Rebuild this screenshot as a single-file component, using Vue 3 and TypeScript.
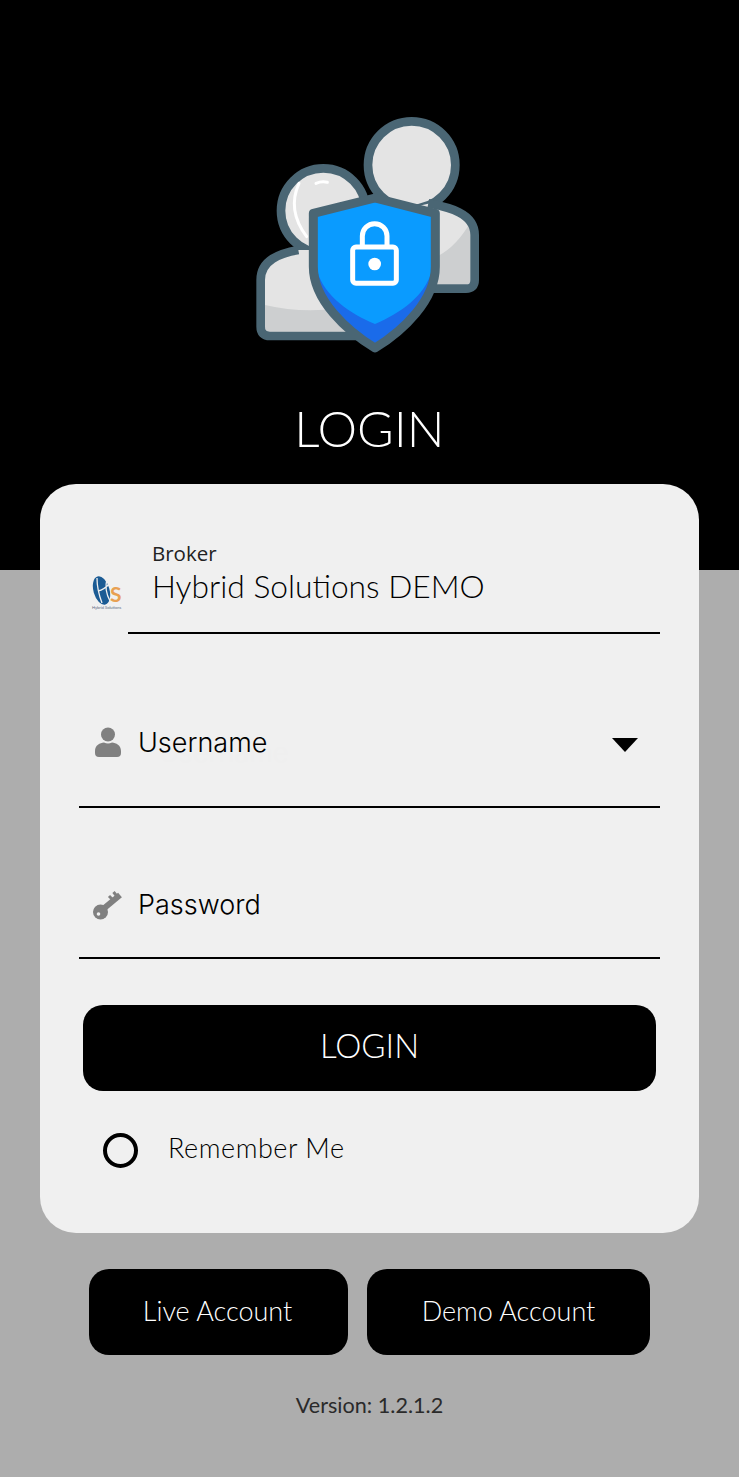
<template>
  <div class="page">
    <header class="hero">
      <svg class="hero-icon" viewBox="0 0 780 810" aria-hidden="true">
        <circle cx="515" cy="195" r="131" fill="#e4e4e4" stroke="#4a6674" stroke-width="26" />
        <path d="M578 308 C630 322 704 338 704 405 L704 540 Q704 566 678 566 L480 566 L480 330 Z" fill="#e4e4e4" />
        <path d="M692 365 Q650 440 590 470 L590 553 L678 553 Q692 553 692 540 Z" fill="#cdcfd0" />
        <path d="M565 310 C625 322 704 338 704 405 L704 540 Q704 566 678 566 L560 566" fill="none" stroke="#4a6674" stroke-width="26" />
        <circle cx="250" cy="332" r="127" fill="#e4e4e4" stroke="#4a6674" stroke-width="26" />
        <path d="M177 250 Q140 330 200 410" fill="none" stroke="#fff" stroke-width="9" stroke-linecap="round" />
        <path d="M228 250 Q245 243 262 247" fill="none" stroke="#fff" stroke-width="9" stroke-linecap="round" />
        <path d="M175 450 C120 460 62 480 62 540 L62 680 Q62 708 90 708 L360 708 L360 450 Z" fill="#e4e4e4" />
        <path d="M75 615 Q180 640 300 625 L340 695 L90 695 Q75 695 75 680 Z" fill="#cdcfd0" />
        <path d="M175 450 C120 460 62 480 62 540 L62 680 Q62 708 90 708 L360 708" fill="none" stroke="#4a6674" stroke-width="26" />
        <path d="M405 294 L220 340 L220 500 C220 600 320 692 405 744 C490 692 586 600 586 500 L586 340 Z" fill="#0a9bff" />
        <path d="M405 672 C480 640 555 590 576 510 L586 500 C586 600 490 692 405 744 C320 692 220 600 220 500 L232 515 C255 590 330 640 405 672 Z" fill="#1a6bea" />
        <path d="M405 294 L220 340 L220 500 C220 600 320 692 405 744 C490 692 586 600 586 500 L586 340 Z" fill="none" stroke="#4a6674" stroke-width="27" stroke-linejoin="round" />
        <rect x="338" y="441" width="131" height="109" rx="10" fill="none" stroke="#fff" stroke-width="15" />
        <path d="M367 441 L367 408 A37 37 0 0 1 441 408 L441 441" fill="none" stroke="#fff" stroke-width="15" />
        <circle cx="404" cy="492" r="19" fill="#fff" />
      </svg>
      <h1 class="hero-title">LOGIN</h1>
    </header>

    <main class="card">
      <div class="broker-row">
        <svg class="broker-logo" viewBox="0 0 34 36" aria-hidden="true">
          <ellipse cx="11.5" cy="14.5" rx="8" ry="14.5" transform="rotate(-16 11.5 14.5)" fill="#1b5b94" />
          <path d="M7 2 Q7 14 12 27 M8 15 Q14 14 20 7 M17 3 Q14 14 20 25" fill="none" stroke="#f0f0f0" stroke-width="1.3" />
          <text x="20" y="26" class="broker-s">S</text>
          <text x="2" y="33" class="broker-tiny">Hybrid Solutions</text>
        </svg>
        <div class="broker-field">
          <span class="broker-label">Broker</span>
          <span class="broker-name">Hybrid Solutions DEMO</span>
        </div>
      </div>

      <div class="input-row username-row">
        <svg class="input-icon" viewBox="0 0 28 30" aria-hidden="true">
          <circle cx="14" cy="7.5" r="7" fill="#808080" />
          <path d="M1 24 C1 18 6 16 10 15.5 Q14 17.5 18 15.5 C22 16 27 18 27 24 L27 26 Q27 30 23 30 L5 30 Q1 30 1 26 Z" fill="#808080" />
        </svg>
        <span class="input-text">Username</span>
        <span class="ghost-text">Username</span>
        <span class="caret"></span>
      </div>

      <div class="input-row password-row">
        <svg class="input-icon key-icon" viewBox="0 0 30 31" aria-hidden="true">
          <circle cx="7.5" cy="23" r="7.5" fill="#808080" />
          <path d="M9 21 L27 6" stroke="#808080" stroke-width="6" fill="none" />
          <path d="M16 7 L20 11 M20.5 3 L24.5 8" stroke="#808080" stroke-width="3" fill="none" />
          <circle cx="5.5" cy="25" r="1.8" fill="#f0f0f0" />
        </svg>
        <span class="input-text">Password</span>
      </div>

      <button class="login-btn" type="button">LOGIN</button>

      <label class="remember">
        <span class="remember-radio"></span>
        <span class="remember-text">Remember Me</span>
      </label>
    </main>

    <div class="accounts">
      <button class="account-btn live" type="button">Live Account</button>
      <button class="account-btn demo" type="button">Demo Account</button>
    </div>

    <p class="version">Version: {{ version }}</p>
  </div>
</template>

<script setup lang="ts">
const version: string = '1.2.1.2'
</script>

<style>
html,
body {
  margin: 0;
  padding: 0;
}
</style>

<style scoped>
.page {
  width: 739px;
  height: 1477px;
  overflow: hidden;
  background: linear-gradient(#000 570px, #adadad 570px);
  font-family: Lato, "Open Sans", sans-serif;
  font-weight: 300;
  color: #000;
}

.hero {
  height: 484px;
  box-sizing: border-box;
  padding-top: 100px;
  display: flex;
  flex-direction: column;
  align-items: center;
}

.hero-icon {
  width: 260px;
  height: 270px;
  display: block;
}

.hero-title {
  margin: 28px 0 0;
  font-size: 50px;
  line-height: 60px;
  font-weight: 300;
  color: #fff;
}

.card {
  width: 659px;
  height: 749px;
  margin-left: 40px;
  box-sizing: border-box;
  padding: 0 39px;
  background: #f0f0f0;
  border-radius: 36px;
}

.broker-row {
  height: 150px;
  display: flex;
  align-items: flex-end;
}

.broker-logo {
  width: 34px;
  height: 36px;
  margin: 0 4px 22px 11px;
  flex: none;
}

.broker-s {
  font: 700 21px Lato, sans-serif;
  fill: #e8a052;
}

.broker-tiny {
  font: 400 4px Lato, sans-serif;
  fill: #5a6a80;
}

.broker-field {
  flex: 1;
  height: 93px;
  box-sizing: border-box;
  padding-left: 24px;
  border-bottom: 2px solid #000;
  display: flex;
  flex-direction: column;
}

.broker-label {
  font: 400 20.5px/24px "Open Sans", sans-serif;
  color: #222;
}

.broker-name {
  font-size: 31.75px;
  line-height: 42px;
}

.input-row {
  position: relative;
  display: flex;
  align-items: flex-start;
  box-sizing: border-box;
  border-bottom: 2px solid #000;
}

.username-row {
  height: 174px;
  padding-top: 93px;
}

.password-row {
  height: 151px;
  padding-top: 81px;
}

.input-icon {
  width: 28px;
  height: 30px;
  margin: 0 15px;
  flex: none;
}

.key-icon {
  width: 30px;
  height: 31px;
  margin: 0 14px;
}

.input-text {
  position: relative;
  z-index: 1;
  margin: 1px 0 0 1px;
  font: 300 27px/30px Inter, "Liberation Sans", sans-serif;
  color: #000;
}

.ghost-text {
  position: absolute;
  left: 80px;
  top: 104px;
  font: 300 27px/30px Inter, "Liberation Sans", sans-serif;
  color: #efefef;
}

.caret {
  position: absolute;
  right: 22px;
  top: 104px;
  width: 0;
  height: 0;
  border-left: 13px solid transparent;
  border-right: 13px solid transparent;
  border-top: 14px solid #000;
}

.login-btn {
  display: block;
  width: 573px;
  height: 86px;
  margin: 46px 0 0 4px;
  padding: 0 0 6px;
  border: none;
  border-radius: 20px;
  background: #000;
  color: #fff;
  font-family: inherit;
  font-size: 33px;
  font-weight: 300;
}

.remember {
  display: flex;
  align-items: center;
  margin: 41px 0 0 24px;
  height: 36px;
}

.remember-radio {
  width: 35px;
  height: 35px;
  box-sizing: border-box;
  border: 4px solid #000;
  border-radius: 50%;
  flex: none;
}

.remember-text {
  margin-left: 30px;
  font-size: 27px;
  line-height: 30px;
  letter-spacing: 0.55px;
  position: relative;
  top: -2px;
}

.accounts {
  display: flex;
  gap: 19px;
  margin: 36px 0 0 89px;
}

.account-btn {
  height: 86px;
  padding: 0 0 4px;
  border: none;
  border-radius: 20px;
  background: #000;
  color: #fff;
  font-family: inherit;
  font-size: 27px;
  font-weight: 300;
}

.live {
  width: 259px;
  padding-right: 2px;
}

.demo {
  width: 283px;
}

.version {
  margin: 36px 0 0;
  text-align: center;
  font-size: 21.6px;
  line-height: 28px;
  font-weight: 400;
  color: #2a2a2a;
}
</style>
